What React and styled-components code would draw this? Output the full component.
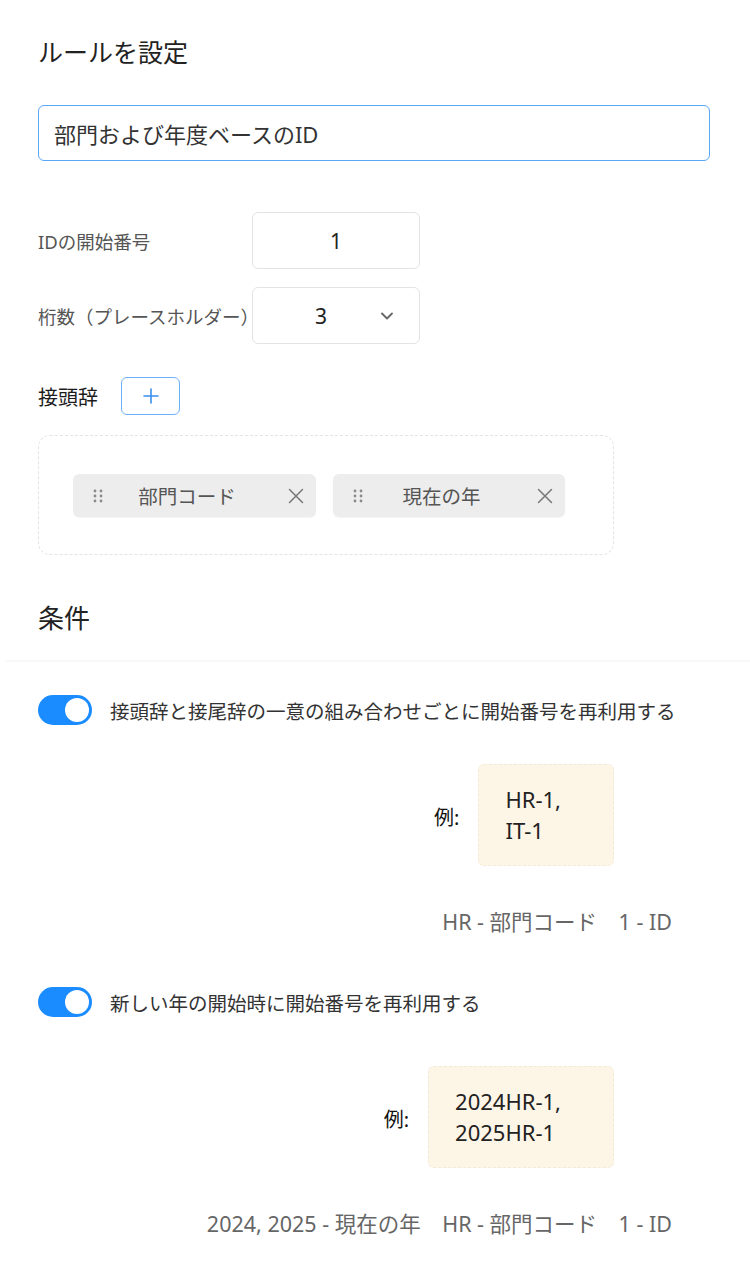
import React from "react";
import styled, { createGlobalStyle } from "styled-components";
import { ChevronDown } from "lucide-react";

const GlobalStyle = createGlobalStyle`
  html, body { margin: 0; padding: 0; background: #ffffff; }
  body {
    font-family: "Noto Sans", "Noto Sans CJK JP", sans-serif;
    color: #333;
  }
  * { box-sizing: border-box; }
`;

const Page = styled.div`
  width: 750px;
  padding: 34px 40px 40px 38px;
  display: flex;
  flex-direction: column;
`;

const Title = styled.h2`
  margin: 0;
  font-size: ${(p) => p.$size || 25}px;
  line-height: 36px;
  font-weight: 400;
  color: #222;
`;

const NameInput = styled.div`
  margin-top: 35px;
  height: 56px;
  border: 1px solid #5ba7f7;
  border-radius: 6px;
  display: flex;
  align-items: center;
  padding: 0 15px;
  font-size: 22px;
  color: #333;
`;

const FieldRow = styled.div`
  display: flex;
  align-items: center;
  margin-top: ${(p) => p.$mt}px;
`;

const FieldLabel = styled.div`
  width: 214px;
  flex-shrink: 0;
  font-size: 18.5px;
  color: #555;
  white-space: nowrap;
`;

const Box = styled.div`
  width: 168px;
  height: 57px;
  border: 1px solid #e3e3e3;
  border-radius: 6px;
  display: flex;
  align-items: center;
  justify-content: ${(p) => (p.$select ? "space-between" : "center")};
  padding: ${(p) => (p.$select ? "0 22px 0 62px" : "0")};
  font-size: 21px;
  color: #222;
  svg { color: #666; }
`;

const PrefixRow = styled.div`
  display: flex;
  align-items: center;
  gap: 23px;
  margin-top: 33px;
`;

const PrefixLabel = styled.div`
  font-size: 20px;
  font-weight: 400;
  color: #1c1c1c;
`;

const AddButton = styled.button`
  width: 59px;
  height: 38px;
  border: 1px solid #6eb2f5;
  border-radius: 6px;
  background: #fff;
  display: flex;
  align-items: center;
  justify-content: center;
  padding: 0;
`;

const DropZone = styled.div`
  margin-top: 20px;
  width: 576px;
  height: 120px;
  border: 1px dashed #e4e4e4;
  border-radius: 12px;
  padding: 38px 34px 0;
  display: flex;
  gap: 17px;
  align-items: flex-start;
`;

const Chip = styled.div`
  width: ${(p) => p.$w}px;
  height: 43px;
  background: #ededed;
  border-radius: 6px;
  box-shadow: 0 1px 1px rgba(0, 0, 0, 0.04);
  display: flex;
  align-items: center;
  padding: 0 12px 0 20px;
`;

const ChipText = styled.span`
  flex: 1;
  text-align: center;
  padding-right: 17px;
  font-size: 19.5px;
  color: #555;
`;

const SectionTitle = styled(Title)`
  margin-top: 45px;
`;

const Divider = styled.div`
  margin: 24px -40px 0 -33px;
  height: 2px;
  background: #f8f8f8;
`;

const ToggleRow = styled.div`
  display: flex;
  align-items: center;
  gap: 18px;
  margin-top: ${(p) => p.$mt}px;
`;

const Toggle = styled.div`
  width: 54px;
  height: 30px;
  border-radius: 15px;
  background: #1a8cff;
  display: flex;
  align-items: center;
  justify-content: flex-end;
  padding: 0 3px;
  flex-shrink: 0;
`;

const Knob = styled.div`
  width: 24px;
  height: 24px;
  border-radius: 50%;
  background: #fff;
`;

const ToggleLabel = styled.div`
  font-size: 19.5px;
  color: #333;
  white-space: nowrap;
`;

const ExampleRow = styled.div`
  display: flex;
  justify-content: flex-end;
  align-items: center;
  gap: 19px;
  padding-right: 96px;
  margin-top: ${(p) => p.$mt}px;
`;

const ExampleLabel = styled.div`
  font-size: 20px;
  font-weight: 400;
  color: #111;
  padding-top: 3px;
`;

const ExampleBox = styled.div`
  background: #fdf5e6;
  border: 1px dashed #f3ead9;
  border-radius: 6px;
  padding: 19px 52px 19px 26px;
  font-size: 22px;
  line-height: 31px;
  color: #222;
`;

const Caption = styled.div`
  text-align: right;
  padding-right: 38px;
  margin-top: ${(p) => p.$mt}px;
  font-size: 21.5px;
  line-height: 28px;
  color: #666;
  white-space: pre;
`;

const Grip = () => (
  <svg width="10" height="14" viewBox="0 0 10 14">
    {[2, 7, 12].map((y) =>
      [2, 8].map((x) => <circle key={`${x}-${y}`} cx={x} cy={y} r="1.4" fill="#8a8a8a" />)
    )}
  </svg>
);

const Close = () => (
  <svg width="16" height="16" viewBox="0 0 16 16">
    <path d="M1.5 1.5 L14.5 14.5 M14.5 1.5 L1.5 14.5" stroke="#777" strokeWidth="1.5" strokeLinecap="round" />
  </svg>
);

const Plus = () => (
  <svg width="16" height="16" viewBox="0 0 16 16">
    <path d="M8 1 V15 M1 8 H15" stroke="#3b8fef" strokeWidth="1.6" strokeLinecap="round" />
  </svg>
);

export default function App() {
  return (
    <>
      <GlobalStyle />
      <Page>
        <Title>ルールを設定</Title>
        <NameInput>部門および年度ベースのID</NameInput>

        <FieldRow $mt={51}>
          <FieldLabel>IDの開始番号</FieldLabel>
          <Box>1</Box>
        </FieldRow>
        <FieldRow $mt={18}>
          <FieldLabel>桁数（プレースホルダー）</FieldLabel>
          <Box $select>
            <span>3</span>
            <ChevronDown size={20} strokeWidth={2.2} />
          </Box>
        </FieldRow>

        <PrefixRow>
          <PrefixLabel>接頭辞</PrefixLabel>
          <AddButton aria-label="add">
            <Plus />
          </AddButton>
        </PrefixRow>

        <DropZone>
          <Chip $w={243}>
            <Grip />
            <ChipText>部門コード</ChipText>
            <Close />
          </Chip>
          <Chip $w={232}>
            <Grip />
            <ChipText>現在の年</ChipText>
            <Close />
          </Chip>
        </DropZone>

        <SectionTitle $size={26}>条件</SectionTitle>
        <Divider />

        <ToggleRow $mt={33}>
          <Toggle>
            <Knob />
          </Toggle>
          <ToggleLabel>接頭辞と接尾辞の一意の組み合わせごとに開始番号を再利用する</ToggleLabel>
        </ToggleRow>
        <ExampleRow $mt={39}>
          <ExampleLabel>例:</ExampleLabel>
          <ExampleBox>
            HR-1,
            <br />
            IT-1
          </ExampleBox>
        </ExampleRow>
        <Caption $mt={42}>{"HR - 部門コード　1 - ID"}</Caption>

        <ToggleRow $mt={51}>
          <Toggle>
            <Knob />
          </Toggle>
          <ToggleLabel>新しい年の開始時に開始番号を再利用する</ToggleLabel>
        </ToggleRow>
        <ExampleRow $mt={49}>
          <ExampleLabel>例:</ExampleLabel>
          <ExampleBox>
            2024HR-1,
            <br />
            2025HR-1
          </ExampleBox>
        </ExampleRow>
        <Caption $mt={42}>{"2024, 2025 - 現在の年　HR - 部門コード　1 - ID"}</Caption>
      </Page>
    </>
  );
}
